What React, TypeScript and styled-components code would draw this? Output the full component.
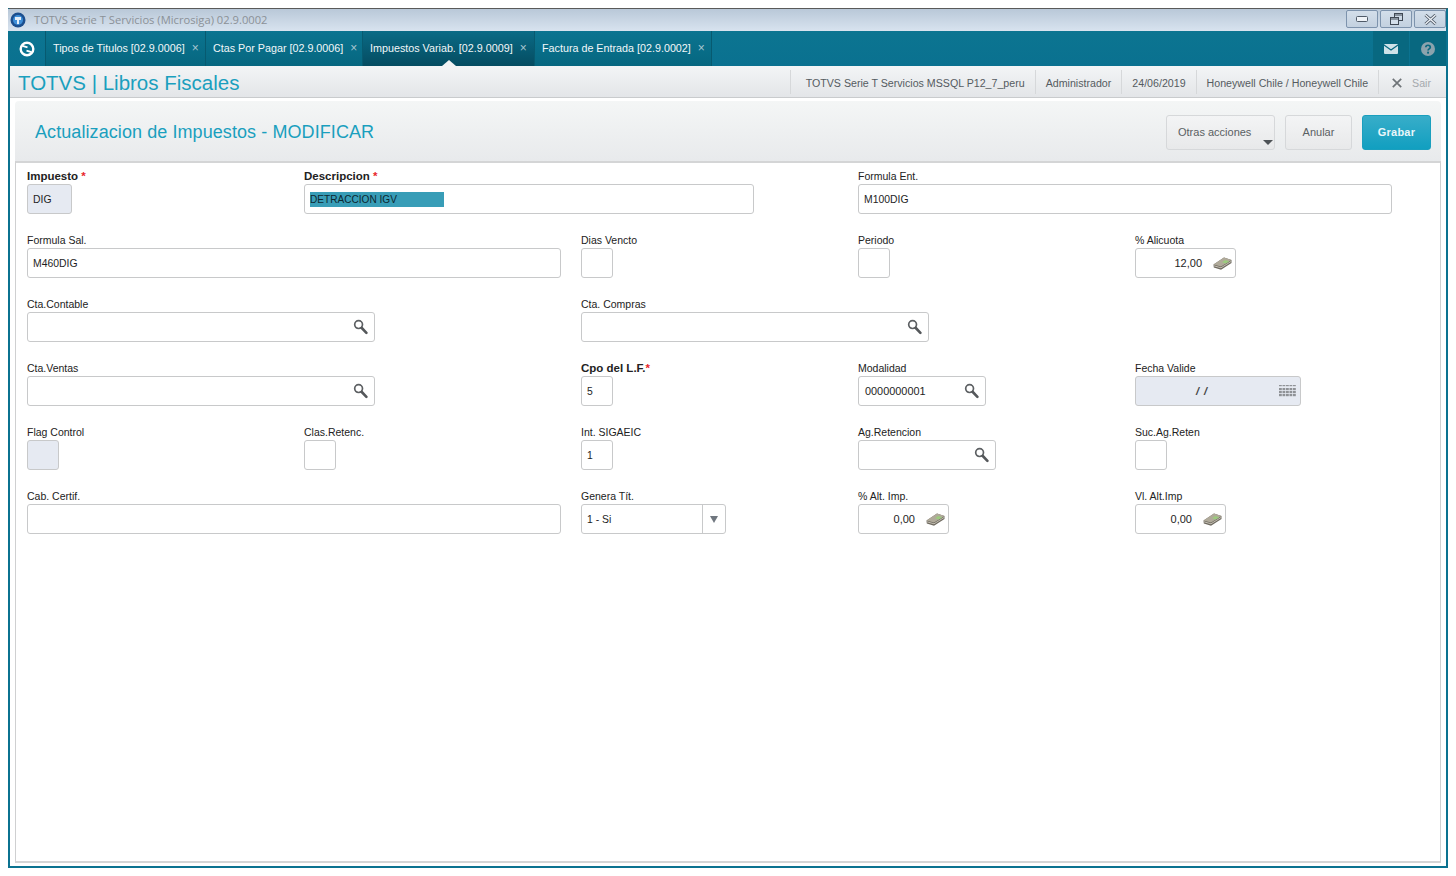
import React from 'react';
import styled, { createGlobalStyle } from 'styled-components';

const GlobalStyle = createGlobalStyle`
  html, body {
    margin: 0;
    padding: 0;
    background: #ffffff;
    font-family: "Liberation Sans", Arial, sans-serif;
  }
`;

const Window = styled.div`
  box-sizing: border-box;
  width: 1440px;
  height: 860px;
  margin: 8px;
  display: flex;
  flex-direction: column;
  border-top: 1px solid #5a5a5a;
  border-left: 2px solid #0b7290;
  border-right: 2px solid #0b7290;
  border-bottom: 2px solid #0b7290;
  background: #ffffff;
`;

const TitleBar = styled.div`
  height: 22px;
  flex: none;
  display: flex;
  align-items: center;
  margin-left: -2px;
  padding-left: 2px;
  background: linear-gradient(#b9c8d8, #d8e3ef);
`;

const TitleText = styled.span`
  margin-left: 8px;
  margin-top: -2px;
  font-family: "Open Sans", sans-serif;
  font-size: 11.2px;
  color: #8b9197;
`;

const WindowButtons = styled.div`
  margin-left: auto;
  margin-top: -2px;
  display: flex;
  gap: 2px;
`;

const WindowButton = styled.div`
  width: 32px;
  height: 18px;
  box-sizing: border-box;
  border: 1px solid #7d93ad;
  border-radius: 2px;
  display: flex;
  align-items: center;
  justify-content: center;
  background: linear-gradient(#d3deea, #c3d1e0);
`;

const TabBar = styled.div`
  height: 35px;
  flex: none;
  display: flex;
  background: linear-gradient(#0c7591, #0a7190);
`;

const HomeTab = styled.div`
  width: 36px;
  padding-right: 2px;
  box-sizing: border-box;
  display: flex;
  align-items: center;
  justify-content: center;
  border-right: 1px solid #075a70;
`;

const Tab = styled.div<{ $width: number; $active?: boolean }>`
  position: relative;
  box-sizing: border-box;
  width: ${(p) => p.$width}px;
  padding-left: 7px;
  padding-bottom: 1px;
  display: flex;
  align-items: center;
  gap: 7px;
  font-size: 10.75px;
  color: #f2f7f9;
  white-space: nowrap;
  border-right: 1px solid #075a70;
  background: ${(p) => (p.$active ? 'linear-gradient(#0a6b86, #054c61)' : 'linear-gradient(#0b7490, #066780)')};
`;

const TabClose = styled.span`
  font-size: 12px;
  color: #a9c6d1;
`;

const TabPointer = styled.span`
  position: absolute;
  left: 79px;
  bottom: 0;
  width: 0;
  height: 0;
  border-left: 7px solid transparent;
  border-right: 7px solid transparent;
  border-bottom: 6px solid #f1f3f4;
`;

const TabTools = styled.div`
  margin-left: auto;
  display: flex;
`;

const ToolButton = styled.div`
  width: 36px;
  margin-left: 1px;
  display: flex;
  align-items: center;
  justify-content: center;
  background: #086880;
`;

const AppHeader = styled.div`
  height: 32px;
  flex: none;
  box-sizing: border-box;
  display: flex;
  align-items: center;
  padding-left: 8px;
  padding-right: 15px;
  border-bottom: 1px solid #c9cbcd;
  background: linear-gradient(#f3f5f6, #e3e5e8);
`;

const AppTitle = styled.div`
  font-size: 20.5px;
  color: #1a9fbe;
  margin-top: 2px;
`;

const HeaderInfo = styled.div`
  margin-left: auto;
  display: flex;
  align-items: center;
  height: 100%;
`;

const InfoItem = styled.div<{ $first?: boolean }>`
  box-sizing: border-box;
  height: 24px;
  display: flex;
  align-items: center;
  padding: 2px 10px 0 ${(p) => (p.$first ? 15 : 10)}px;
  border-left: 1px solid #d6d8da;
  font-size: 10.65px;
  color: #555b60;
  white-space: nowrap;
`;

const LogoutItem = styled(InfoItem)`
  padding: 2px 0 0 13px;
  gap: 10px;
  color: #a5a9ad;
`;

const Content = styled.div`
  flex: 1;
  min-height: 0;
  display: flex;
  flex-direction: column;
  padding: 3px 5px 3px 5px;
`;

const PanelHeader = styled.div`
  height: 60px;
  flex: none;
  box-sizing: border-box;
  display: flex;
  align-items: center;
  padding: 3px 10px 0 20px;
  border-radius: 4px 4px 0 0;
  background: linear-gradient(#f4f6f6, #e8eaec);
`;

const PanelTitle = styled.h1`
  margin: 0;
  font-size: 18px;
  font-weight: normal;
  letter-spacing: 0.08px;
  color: #1a9fbe;
`;

const Actions = styled.div`
  margin-left: auto;
  display: flex;
  gap: 10px;
`;

const ActionButton = styled.div<{ $width: number; $primary?: boolean }>`
  position: relative;
  box-sizing: border-box;
  width: ${(p) => p.$width}px;
  height: 35px;
  display: flex;
  align-items: center;
  justify-content: ${(p) => (p.$primary ? 'center' : 'flex-start')};
  padding-left: ${(p) => (p.$primary ? 0 : 11)}px;
  padding-bottom: 2px;
  border: 1px solid ${(p) => (p.$primary ? '#1a9fbe' : '#d6d8da')};
  border-radius: 3px;
  font-size: 11px;
  font-weight: ${(p) => (p.$primary ? 'bold' : 'normal')};
  letter-spacing: ${(p) => (p.$primary ? 0.2 : 0)}px;
  color: ${(p) => (p.$primary ? '#e9f6fa' : '#5a5f63')};
  background: ${(p) => (p.$primary ? 'linear-gradient(#38adc9, #119fc0)' : 'linear-gradient(#f3f4f5, #e8e9ea)')};
`;

const AnularButton = styled(ActionButton)`
  justify-content: center;
  padding-left: 0;
`;

const DropArrow = styled.span`
  position: absolute;
  right: 1px;
  bottom: 4px;
  width: 0;
  height: 0;
  border-left: 5px solid transparent;
  border-right: 5px solid transparent;
  border-top: 5px solid #4e5357;
`;

const FormBox = styled.div`
  flex: 1;
  box-sizing: border-box;
  display: grid;
  grid-template-columns: repeat(5, 277px);
  grid-auto-rows: 64px;
  align-content: start;
  padding: 6px 0 0 11px;
  border: 1px solid #cfd0d1;
  border-top: 2px solid #d4d5d6;
  border-bottom: 2px solid #d4d5d6;
  background: #ffffff;
`;

const Field = styled.div<{ $col: number; $span?: number }>`
  grid-column: ${(p) => p.$col} / span ${(p) => p.$span ?? 1};
  display: flex;
  flex-direction: column;
  align-items: flex-start;
`;

const Label = styled.label<{ $strong?: boolean }>`
  height: 15px;
  line-height: 14px;
  font-size: ${(p) => (p.$strong ? 11.5 : 10.5)}px;
  font-weight: ${(p) => (p.$strong ? 'bold' : 'normal')};
  color: #222222;
  white-space: nowrap;
`;

const Required = styled.span`
  color: #e8262c;
  font-weight: bold;
`;

const Input = styled.div<{ $width: number; $disabled?: boolean }>`
  box-sizing: border-box;
  width: ${(p) => p.$width}px;
  height: 30px;
  display: flex;
  align-items: center;
  padding: 0 5px;
  border: 1px solid #c8c9ca;
  border-radius: 3px;
  font-size: 10.4px;
  color: #1e1e1e;
  background: ${(p) => (p.$disabled ? '#e6eaf2' : '#ffffff')};
`;

const NumberValue = styled.span`
  margin-left: auto;
  margin-right: 11px;
  font-size: 11px;
`;

const CodeValue = styled.span`
  margin-left: 1px;
  font-size: 10.9px;
`;

const IconSlot = styled.span<{ $gap?: number }>`
  margin-left: auto;
  margin-right: ${(p) => p.$gap ?? 1}px;
  display: flex;
`;

const MoneySlot = styled.span`
  margin-right: -2px;
  display: flex;
`;

const Selection = styled.span`
  width: 134px;
  height: 15px;
  line-height: 15px;
  font-size: 10.1px;
  background: #389db7;
  color: #0d2730;
`;

const DateValue = styled.span`
  margin-left: 55px;
  font-size: 11px;
  font-style: italic;
  font-weight: bold;
  word-spacing: 2px;
  color: #444444;
`;

const SelectValue = styled.span`
  flex: 1;
`;

const SelectArrow = styled.span`
  box-sizing: border-box;
  width: 23px;
  height: 28px;
  margin-right: -5px;
  display: flex;
  align-items: center;
  justify-content: center;
  border-left: 1px solid #c8c9ca;
  &::after {
    content: '';
    border-left: 4.5px solid transparent;
    border-right: 4.5px solid transparent;
    border-top: 7px solid #70777f;
  }
`;

const SearchIcon = () => (
  <svg width="15" height="16" viewBox="0 0 15 16">
    <circle cx="5.6" cy="5.6" r="3.9" fill="none" stroke="#5d6063" strokeWidth="1.7" />
    <path d="M8.8 9 L13.4 13.8" stroke="#55585b" strokeWidth="2.6" strokeLinecap="round" />
  </svg>
);

const MoneyIcon = () => (
  <MoneySlot>
    <svg width="19" height="13" viewBox="0 0 19 13">
      <path d="M0.5 7.5 L11 0.5 L18.5 3 L18.5 6 L8 12.8 L0.8 10.6 Z" fill="#6f6a60" />
      <path d="M0.5 7.5 L11 0.5 L18.5 3 L8 9.6 Z" fill="#b0aa9a" />
      <path d="M9 5.2 L12 3 L16.3 4.2 L12.8 6.6 Z" fill="#9ccb7e" />
      <path d="M1 8.8 L8 10.8 L18.2 4.4" fill="none" stroke="#d8d3c6" strokeWidth="0.8" />
    </svg>
  </MoneySlot>
);

const CalendarIcon = () => (
  <svg width="17" height="12" viewBox="0 0 17 12" fill="#8f9296">
    {[0, 3, 6, 9].map((y) =>
      [0, 3.5, 7, 10.5, 14].map((x) => (
        <rect key={`${x}-${y}`} x={x} y={y} width="2.8" height={y === 0 ? 1.2 : 2.2} />
      ))
    )}
  </svg>
);

const Search = () => (
  <IconSlot>
    <SearchIcon />
  </IconSlot>
);

const App = () => {
  return (
    <>
      <GlobalStyle />
      <Window>
        <TitleBar>
          <svg width="16" height="16" viewBox="0 0 16 16">
            <circle cx="8" cy="8" r="7.5" fill="#1c4f8f" />
            <circle cx="8" cy="8" r="5" fill="#3f8fd8" />
            <path d="M5 5 H11 V8 H9 V12 H7 V8 H5 Z" fill="#e4eef8" />
          </svg>
          <TitleText>TOTVS Serie T Servicios (Microsiga) 02.9.0002</TitleText>
          <WindowButtons>
            <WindowButton>
              <svg width="12" height="6" viewBox="0 0 12 6">
                <rect x="0.5" y="0.5" width="11" height="5" rx="1" fill="#eef2f7" stroke="#4f5a68" />
              </svg>
            </WindowButton>
            <WindowButton>
              <svg width="13" height="12" viewBox="0 0 13 12">
                <rect x="4.5" y="0.5" width="8" height="7" fill="none" stroke="#3f4854" />
                <rect x="0.5" y="4.5" width="8" height="7" fill="#d3deea" stroke="#3f4854" />
                <path d="M1 6 H8 M5 2 H12" stroke="#3f4854" />
              </svg>
            </WindowButton>
            <WindowButton>
              <svg width="13" height="11" viewBox="0 0 13 11">
                <path d="M1.5 1 L11.5 10 M11.5 1 L1.5 10" stroke="#4a5562" strokeWidth="3" />
                <path d="M1.5 1 L11.5 10 M11.5 1 L1.5 10" stroke="#eef2f7" strokeWidth="1.4" />
              </svg>
            </WindowButton>
          </WindowButtons>
        </TitleBar>

        <TabBar>
          <HomeTab>
            <svg width="16" height="16" viewBox="0 0 16 16">
              <circle cx="8" cy="8" r="6.3" fill="none" stroke="#ffffff" strokeWidth="2.4" />
              <path d="M3.5 4.8 L8.5 6.3 M7.5 9.7 L12.5 11.2" stroke="#ffffff" strokeWidth="1.8" />
            </svg>
          </HomeTab>
          <Tab $width={160}>
            Tipos de Titulos [02.9.0006]<TabClose>×</TabClose>
          </Tab>
          <Tab $width={157}>
            Ctas Por Pagar [02.9.0006]<TabClose>×</TabClose>
          </Tab>
          <Tab $width={172} $active>
            Impuestos Variab. [02.9.0009]<TabClose>×</TabClose>
            <TabPointer />
          </Tab>
          <Tab $width={177}>
            Factura de Entrada [02.9.0002]<TabClose>×</TabClose>
          </Tab>
          <TabTools>
            <ToolButton>
              <svg width="14" height="10" viewBox="0 0 14 10">
                <rect width="14" height="10" rx="1" fill="#cfe2e8" />
                <path d="M0 1 L7 6 L14 1" fill="none" stroke="#086880" strokeWidth="1.2" />
              </svg>
            </ToolButton>
            <ToolButton>
              <svg width="14" height="14" viewBox="0 0 14 14">
                <circle cx="7" cy="7" r="7" fill="#8ba3ad" />
                <path d="M4.8 5.3 C4.8 2.6 9.3 2.6 9.3 5.2 C9.3 7 7 6.8 7 8.6" fill="none" stroke="#086880" strokeWidth="1.7" />
                <rect x="6.1" y="9.7" width="1.9" height="1.9" fill="#086880" />
              </svg>
            </ToolButton>
          </TabTools>
        </TabBar>

        <AppHeader>
          <AppTitle>TOTVS | Libros Fiscales</AppTitle>
          <HeaderInfo>
            <InfoItem $first>TOTVS Serie T Servicios MSSQL P12_7_peru</InfoItem>
            <InfoItem>Administrador</InfoItem>
            <InfoItem>24/06/2019</InfoItem>
            <InfoItem>Honeywell Chile / Honeywell Chile</InfoItem>
            <LogoutItem>
              <svg width="10" height="10" viewBox="0 0 10 10">
                <path d="M0.8 0.8 L9.2 9.2 M9.2 0.8 L0.8 9.2" stroke="#6f7478" strokeWidth="1.7" />
              </svg>
              Sair
            </LogoutItem>
          </HeaderInfo>
        </AppHeader>

        <Content>
          <PanelHeader>
            <PanelTitle>Actualizacion de Impuestos - MODIFICAR</PanelTitle>
            <Actions>
              <ActionButton $width={109}>
                Otras acciones
                <DropArrow />
              </ActionButton>
              <AnularButton $width={67}>Anular</AnularButton>
              <ActionButton $width={69} $primary>
                Grabar
              </ActionButton>
            </Actions>
          </PanelHeader>

          <FormBox>
            <Field $col={1}>
              <Label $strong>
                Impuesto <Required>*</Required>
              </Label>
              <Input $width={45} $disabled>DIG</Input>
            </Field>
            <Field $col={2} $span={2}>
              <Label $strong>
                Descripcion <Required>*</Required>
              </Label>
              <Input $width={450}>
                <Selection>DETRACCION IGV</Selection>
              </Input>
            </Field>
            <Field $col={4} $span={2}>
              <Label>Formula Ent.</Label>
              <Input $width={534}>M100DIG</Input>
            </Field>

            <Field $col={1} $span={2}>
              <Label>Formula Sal.</Label>
              <Input $width={534}>M460DIG</Input>
            </Field>
            <Field $col={3}>
              <Label>Dias Vencto</Label>
              <Input $width={32} />
            </Field>
            <Field $col={4}>
              <Label>Periodo</Label>
              <Input $width={32} />
            </Field>
            <Field $col={5}>
              <Label>% Alicuota</Label>
              <Input $width={101}>
                <NumberValue>12,00</NumberValue>
                <MoneyIcon />
              </Input>
            </Field>

            <Field $col={1} $span={2}>
              <Label>Cta.Contable</Label>
              <Input $width={348}>
                <Search />
              </Input>
            </Field>
            <Field $col={3} $span={2}>
              <Label>Cta. Compras</Label>
              <Input $width={348}>
                <Search />
              </Input>
            </Field>

            <Field $col={1} $span={2}>
              <Label>Cta.Ventas</Label>
              <Input $width={348}>
                <Search />
              </Input>
            </Field>
            <Field $col={3}>
              <Label $strong>
                Cpo del L.F.<Required>*</Required>
              </Label>
              <Input $width={32}>5</Input>
            </Field>
            <Field $col={4}>
              <Label>Modalidad</Label>
              <Input $width={128}>
                <CodeValue>0000000001</CodeValue>
                <Search />
              </Input>
            </Field>
            <Field $col={5}>
              <Label>Fecha Valide</Label>
              <Input $width={166} $disabled>
                <DateValue>/ /</DateValue>
                <IconSlot $gap={-1}>
                  <CalendarIcon />
                </IconSlot>
              </Input>
            </Field>

            <Field $col={1}>
              <Label>Flag Control</Label>
              <Input $width={32} $disabled />
            </Field>
            <Field $col={2}>
              <Label>Clas.Retenc.</Label>
              <Input $width={32} />
            </Field>
            <Field $col={3}>
              <Label>Int. SIGAEIC</Label>
              <Input $width={32}>1</Input>
            </Field>
            <Field $col={4}>
              <Label>Ag.Retencion</Label>
              <Input $width={138}>
                <Search />
              </Input>
            </Field>
            <Field $col={5}>
              <Label>Suc.Ag.Reten</Label>
              <Input $width={32} />
            </Field>

            <Field $col={1} $span={2}>
              <Label>Cab. Certif.</Label>
              <Input $width={534} />
            </Field>
            <Field $col={3}>
              <Label>Genera Tít.</Label>
              <Input $width={145}>
                <SelectValue>1 - Si</SelectValue>
                <SelectArrow />
              </Input>
            </Field>
            <Field $col={4}>
              <Label>% Alt. Imp.</Label>
              <Input $width={91}>
                <NumberValue>0,00</NumberValue>
                <MoneyIcon />
              </Input>
            </Field>
            <Field $col={5}>
              <Label>Vl. Alt.Imp</Label>
              <Input $width={91}>
                <NumberValue>0,00</NumberValue>
                <MoneyIcon />
              </Input>
            </Field>
          </FormBox>
        </Content>
      </Window>
    </>
  );
};

export default App;
